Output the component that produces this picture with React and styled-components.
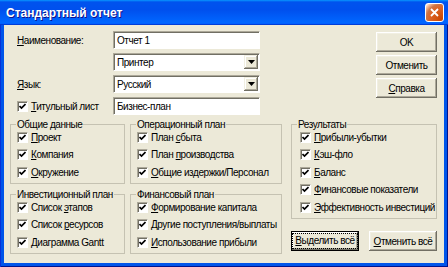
import React from 'react'
import styled, { createGlobalStyle } from 'styled-components'

const GlobalStyle = createGlobalStyle`
  html, body {
    margin: 0;
    padding: 0;
    background: #ECE9D8;
  }
  body {
    font-family: "Liberation Sans", Arial, sans-serif;
    font-size: 10px;
    letter-spacing: -0.45px;
    color: #000;
  }
`

const Window = styled.div`
  width: 448px;
  height: 267px;
  display: flex;
  flex-direction: column;
  overflow: hidden;
`

const TitleBar = styled.div`
  height: 25px;
  flex: none;
  display: flex;
  align-items: center;
  justify-content: space-between;
  padding: 0 4px 0 6px;
  background: linear-gradient(180deg, #0997ff, #0053ee 8%, #0050ee 40%, #0066ff 88%, #0066ff 93%, #005bff 95%, #003dd7 96%, #003dd7);
`

const Title = styled.span`
  font: bold 12px "Liberation Sans", Arial, sans-serif;
  letter-spacing: 0;
  color: #fff;
  text-shadow: 1px 1px #0f1089;
`

const CloseButton = styled.div`
  width: 19px;
  height: 19px;
  box-sizing: border-box;
  border: 1px solid #fff;
  border-radius: 3px;
  background: radial-gradient(circle at 90% 90%, #cc4600 0%, #dc6527 55%, #cd7546 70%, #ffccb2 90%, #fff 100%);
  display: flex;
  align-items: center;
  justify-content: center;
`

const Frame = styled.div`
  flex: 1;
  display: flex;
  padding: 0 4px 4px;
  background: #0055ea;
  box-shadow: inset 1px 0 #0831d9, inset -1px -1px #00138c;
`

const Content = styled.div`
  flex: 1;
  display: flex;
  flex-direction: column;
  background: #ECE9D8;
  padding: 6px 7px 0 6px;
`

const Top = styled.div`
  display: flex;
  justify-content: space-between;
  align-items: flex-start;
`

const FormGrid = styled.div`
  margin-left: 7px;
  display: grid;
  grid-template-columns: 96px 147px;
  grid-auto-rows: 18px;
  row-gap: 4px;
  align-items: center;
`

const FieldLabel = styled.span`
  display: flex;
  align-items: center;
  white-space: nowrap;
`

const Field = styled.div`
  height: 18px;
  box-sizing: border-box;
  border: 1px solid;
  border-color: #ACA899 #fff #fff #ACA899;
  box-shadow: inset 1px 1px #716F64;
  padding: 1px;
  background: #fff;
  display: flex;
  align-items: center;
`

const FieldText = styled.span`
  flex: 1;
  padding-left: 2px;
  white-space: nowrap;
`

const ArrowButton = styled.span`
  width: 14px;
  height: 14px;
  flex: none;
  box-sizing: border-box;
  background: #ECE9D8;
  box-shadow: inset -1px -1px #716F64, inset 1px 1px #F1EFE2, inset -2px -2px #ACA899, inset 2px 2px #fff;
  display: flex;
  align-items: center;
  justify-content: center;
`

const ButtonStack = styled.div`
  margin-top: 1px;
  display: flex;
  flex-direction: column;
  gap: 3px;
`

const PushButton = styled.div`
  width: ${p => p.$w}px;
  height: 20px;
  box-sizing: border-box;
  background: #ECE9D8;
  display: flex;
  align-items: center;
  justify-content: center;
  white-space: nowrap;
  border: ${p => (p.$default ? '1px solid #000' : 'none')};
  box-shadow: inset -1px -1px #716F64, inset 1px 1px #fff, inset -2px -2px #ACA899, inset 2px 2px #F1EFE2;
`

const FocusRect = styled.span`
  padding: 1px 2px;
  border: 1px dotted #000;
  line-height: 12px;
`

const Bottom = styled.div`
  margin-top: 2.5px;
  display: flex;
  align-items: flex-start;
`

const GroupGrid = styled.div`
  display: grid;
  grid-template-columns: 115px 152px;
  column-gap: 5px;
  row-gap: 3.5px;
`

const RightColumn = styled.div`
  width: 146px;
  margin-left: 9px;
  display: flex;
  flex-direction: column;
`

const Group = styled.fieldset`
  margin: 0;
  min-width: 0;
  padding: 0 0 4.5px 0;
  border: 1px solid #C5C2B2;
  display: flex;
  flex-direction: column;
  gap: 4.5px;
`

const Legend = styled.legend`
  margin-left: 5px;
  padding: 0 1px;
  line-height: 13px;
  white-space: nowrap;
`

const CheckRow = styled.div`
  height: 13px;
  margin-left: ${p => p.$inset || 0}px;
  display: flex;
  align-items: center;
  gap: 3px;
  white-space: nowrap;
`

const Box = styled.span`
  width: 11px;
  height: 11px;
  flex: none;
  box-sizing: border-box;
  border: 1px solid;
  border-color: #ACA899 #fff #fff #ACA899;
  box-shadow: inset 1px 1px #716F64;
  background: #fff;
  display: flex;
  align-items: center;
  justify-content: center;
`

const ButtonRow = styled.div`
  margin-top: 12px;
  display: flex;
  justify-content: space-between;
  align-items: center;
`

function Accel({ text, u }) {
  if (u === undefined || u < 0) return text
  return (
    <>
      {text.slice(0, u)}
      <u>{text[u]}</u>
      {text.slice(u + 1)}
    </>
  )
}

function Check({ text, u, inset }) {
  return (
    <CheckRow $inset={inset}>
      <Box>
        <svg width="7" height="7" viewBox="0 0 7 7">
          <polyline points="0.5,3 2.5,5 6.5,1" fill="none" stroke="#000" strokeWidth="1.7" />
        </svg>
      </Box>
      <span><Accel text={text} u={u} /></span>
    </CheckRow>
  )
}

function Arrow() {
  return (
    <ArrowButton>
      <svg width="7" height="4" viewBox="0 0 7 4">
        <polygon points="0,0 7,0 3.5,4" fill="#000" />
      </svg>
    </ArrowButton>
  )
}

const groups = [
  {
    title: 'Общие данные',
    items: [
      { text: 'Проект', u: 0 },
      { text: 'Компания', u: 0 },
      { text: 'Окружение', u: 0 },
    ],
  },
  {
    title: 'Операционный план',
    items: [
      { text: 'План сбыта', u: 5 },
      { text: 'План производства', u: 5 },
      { text: 'Общие издержки/Персонал', u: 0 },
    ],
  },
  {
    title: 'Инвестиционный план',
    items: [
      { text: 'Список этапов', u: 7 },
      { text: 'Список ресурсов', u: 7 },
      { text: 'Диаграмма Gantt', u: 0 },
    ],
  },
  {
    title: 'Финансовый план',
    items: [
      { text: 'Формирование капитала', u: 0 },
      { text: 'Другие поступления/выплаты', u: 0 },
      { text: 'Использование прибыли', u: 0 },
    ],
  },
]

const results = [
  { text: 'Прибыли-убытки', u: 0 },
  { text: 'Кэш-фло', u: 0 },
  { text: 'Баланс', u: 0 },
  { text: 'Финансовые показатели', u: 0 },
  { text: 'Эффективность инвестиций', u: 0 },
]

export default function App() {
  return (
    <Window>
      <GlobalStyle />
      <TitleBar>
        <Title>Стандартный отчет</Title>
        <CloseButton>
          <svg width="9" height="9" viewBox="0 0 9 9">
            <path d="M1 1L8 8M8 1L1 8" stroke="#fff" strokeWidth="1.8" />
          </svg>
        </CloseButton>
      </TitleBar>
      <Frame>
        <Content>
          <Top>
            <FormGrid>
              <FieldLabel><Accel text="Наименование:" u={0} /></FieldLabel>
              <Field><FieldText>Отчет 1</FieldText></Field>
              <span />
              <Field><FieldText>Принтер</FieldText><Arrow /></Field>
              <FieldLabel><Accel text="Язык:" u={0} /></FieldLabel>
              <Field><FieldText>Русский</FieldText><Arrow /></Field>
              <Check text="Титульный лист" u={0} />
              <Field><FieldText>Бизнес-план</FieldText></Field>
            </FormGrid>
            <ButtonStack>
              <PushButton $w={61}>OK</PushButton>
              <PushButton $w={61}>Отменить</PushButton>
              <PushButton $w={61}><Accel text="Справка" u={0} /></PushButton>
            </ButtonStack>
          </Top>
          <Bottom>
            <GroupGrid>
              {groups.map(g => (
                <Group key={g.title}>
                  <Legend>{g.title}</Legend>
                  {g.items.map(it => <Check key={it.text} inset={6} {...it} />)}
                </Group>
              ))}
            </GroupGrid>
            <RightColumn>
              <Group>
                <Legend>Результаты</Legend>
                {results.map(it => <Check key={it.text} inset={8} {...it} />)}
              </Group>
              <ButtonRow>
                <PushButton $w={68} $default>
                  <FocusRect><Accel text="Выделить всё" u={0} /></FocusRect>
                </PushButton>
                <PushButton $w={68}><Accel text="Отменить всё" u={0} /></PushButton>
              </ButtonRow>
            </RightColumn>
          </Bottom>
        </Content>
      </Frame>
    </Window>
  )
}
